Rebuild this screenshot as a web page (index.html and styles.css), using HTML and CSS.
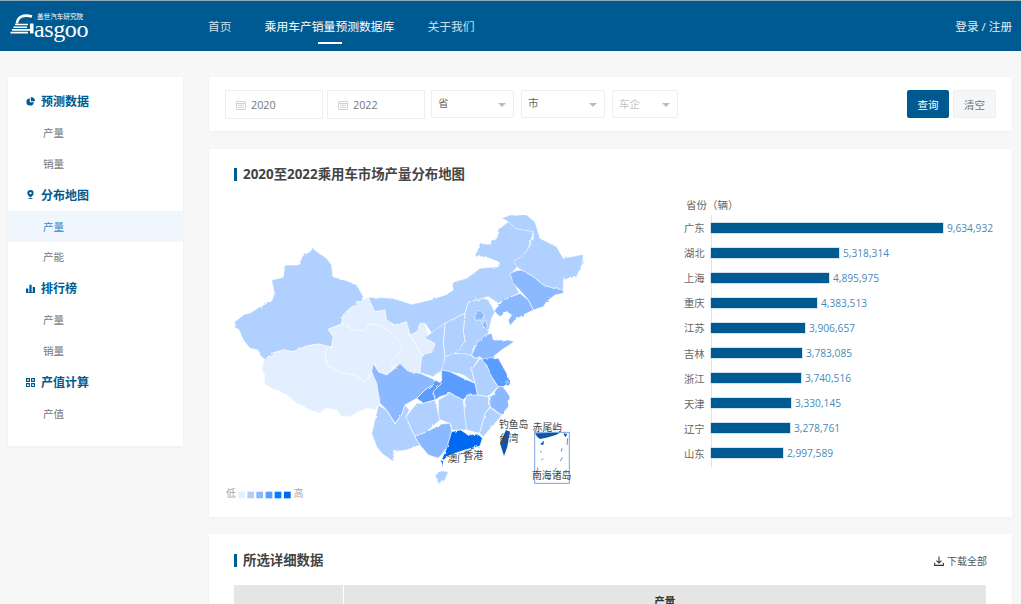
FILE: index.html
```html
<!DOCTYPE html>
<html lang="zh-CN">
<head>
  <meta charset="UTF-8" />
  <meta name="viewport" content="width=device-width, initial-scale=1.0" />
  <title>乘用车产销量预测数据库</title>
  <link rel="stylesheet" href="styles.css">
</head>
<body>
  <!-- Header -->
  <header class="topbar">
    <a class="logo">
      <svg class="logo-mark" viewBox="0 0 24 20" width="24" height="20">
        <path d="M7 9.500C7.500 3 13 0 22 2.500" fill="none" stroke="#fff" stroke-width="2.600" />
        <path d="M5 10.500H18M3.500 13.200H17M2 15.900H20M0.500 18.600H18" stroke="#fff" stroke-width="1.600" />
        <path d="M20 9.500H23.500V19.400H20Z" fill="#fff" />
      </svg>
      <span class="logo-text">
        <small>盖世汽车研究院</small>
        <b>asgoo</b>
      </span>
    </a>
    <nav class="nav">
      <a>首页</a>
      <a class="current">乘用车产销量预测数据库</a>
      <a>关于我们</a>
    </nav>
    <a class="login">登录 / 注册</a>
  </header>

  <div class="page">
    <!-- Sidebar -->
    <aside class="sidebar">
      <h3>
        <svg viewBox="0 0 12 12" width="9" height="9"><path d="M5 1.500A5 5 0 1 0 10.500 7H5Z" /><path d="M6.500 0A5.500 5.500 0 0 1 12 5.500H6.500Z" /></svg>
        预测数据
      </h3>
      <a>产量</a>
      <a>销量</a>
      <h3>
        <svg viewBox="0 0 12 12" width="9" height="11"><path fill-rule="evenodd" d="M6 0A4.200 4.200 0 0 1 10.200 4.200C10.200 6.500 7.500 8.500 6 10C4.500 8.500 1.800 6.500 1.800 4.200A4.200 4.200 0 0 1 6 0ZM6 2.700A1.500 1.500 0 1 0 6 5.700A1.500 1.500 0 1 0 6 2.700Z" /><rect x="3.500" y="10.800" width="5" height="1.200" /></svg>
        分布地图
      </h3>
      <a class="active">产量</a>
      <a>产能</a>
      <h3>
        <svg viewBox="0 0 12 12" width="9" height="9"><path d="M0 6H3V11H0ZM4.500 1H7.500V11H4.500ZM9 4H12V11H9ZM0 11H12V12H0Z" /></svg>
        排行榜
      </h3>
      <a>产量</a>
      <a>销量</a>
      <h3>
        <svg viewBox="0 0 12 12" width="9" height="9"><path fill-rule="evenodd" d="M0 0H5.300V5.300H0ZM1.500 1.500V3.800H3.800V1.500ZM6.700 0H12V5.300H6.700ZM8.200 1.500V3.800H10.500V1.500ZM0 6.700H5.300V12H0ZM1.500 8.200V10.500H3.800V8.200ZM6.700 6.700H12V12H6.700ZM8.200 8.200V10.500H10.500V8.200Z" /></svg>
        产值计算
      </h3>
      <a>产值</a>
    </aside>

    <main class="content">
      <!-- Filters -->
      <section class="card filters">
        <div class="date-input">
          <svg viewBox="0 0 10 10" width="10" height="10"><path d="M0.500 1.500H9.500V9.500H0.500ZM0.500 3.500H9.500M2 5.200H8M2 7.200H8" fill="none" stroke="#d0d4d8" /></svg>
          2020
        </div>
        <div class="date-input">
          <svg viewBox="0 0 10 10" width="10" height="10"><path d="M0.500 1.500H9.500V9.500H0.500ZM0.500 3.500H9.500M2 5.200H8M2 7.200H8" fill="none" stroke="#d0d4d8" /></svg>
          2022
        </div>
        <div class="select sel-province">省<i></i></div>
        <div class="select sel-city">市<i></i></div>
        <div class="select sel-brand disabled">车企<i></i></div>
        <button class="btn primary">查询</button>
        <button class="btn plain">清空</button>
      </section>

      <!-- Map and ranking -->
      <section class="card map-card">
        <h2 class="title">2020至2022乘用车市场产量分布地图</h2>
        <div class="chart-row">
          <svg class="map" viewBox="0 0 1140 930" width="380" height="310">
            <defs>
              <!-- roughens the province outlines -->
              <filter id="rough" x="-5%" y="-5%" width="110%" height="110%">
                <feTurbulence type="fractalNoise" baseFrequency="0.07" numOctaves="2" seed="4" result="noise" />
                <feDisplacementMap in="SourceGraphic" in2="noise" scale="8" result="moved" />
                <feGaussianBlur in="moved" stdDeviation="0.9" />
              </filter>
            </defs>
            <g class="regions" filter="url(#rough)">
              <path fill="#b0d1ff" d="M29 365L55 345L77 338L105 320L140 303L148 280L140 240L175 232L180 195L220 195L235 165L255 155L263 145L285 162L305 175L320 195L323 230L365 242L395 255L415 290L410 300L375 325L355 345L350 372L310 388L325 410L320 442L280 432L245 438L205 455L175 450L140 460L120 480L105 465L100 450L75 445L55 420L43 390L29 382Z" />
              <path fill="#e3efff" d="M115 485L140 460L175 450L205 455L245 438L280 432L320 442L300 455L305 495L345 518L390 525L415 545L435 530L440 515L455 540L465 610L450 630L430 625L400 635L375 650L350 650L335 630L300 625L285 640L255 630L215 610L185 585L165 575L140 565L115 550L120 530L110 505Z" />
              <path fill="#e3efff" d="M350 372L355 345L375 325L410 300L430 292L440 315L450 335L480 330L485 360L510 375L545 365L555 405L570 430L590 465L585 518L560 525L525 490L505 505L495 485L400 400Z" />
              <path fill="#e3efff" d="M555 405L575 395L585 370L600 370L610 405L632 430L627 458L590 467L570 430Z" />
              <path fill="#e3efff" d="M310 388L350 372L390 392L425 392L430 372L465 375L500 400L530 430L530 450L515 470L495 485L505 505L485 525L460 515L450 492L440 515L435 530L415 545L390 525L345 518L305 495L300 455L320 442L325 410Z" />
              <path fill="#b0d1ff" d="M430 292L505 295L560 313L615 300L660 285L685 270L680 247L725 235L765 205L820 200L820 185L780 170L750 170L765 130L790 133L815 115L825 85L850 65L930 65L925 100L900 175L860 220L880 280L820 310L790 290L730 307L720 340L670 365L620 400L600 370L585 370L575 395L555 405L545 365L510 375L485 360L480 330L450 335L440 315Z" />
              <path fill="#b0d1ff" d="M850 65L870 85L925 95L925 115L910 145L895 165L865 185L880 205L890 210L925 230L955 255L985 265L1015 270L1015 240L1055 230L1073 190L1075 163L1015 175L995 140L945 115L930 65L905 45L855 45L830 55Z" />
              <path fill="#8ab9ff" d="M855 220L875 212L890 210L925 230L955 255L985 265L1015 270L1015 280L990 285L965 305L955 320L925 330L910 300L890 277L865 250Z" />
              <path fill="#8ab9ff" d="M807 333L835 300L885 280L910 300L925 330L895 345L870 360L855 377L850 360L860 345L845 335L825 350Z" />
              <path fill="#b0d1ff" d="M720 340L730 307L775 295L790 300L810 335L800 355L790 400L755 430L745 445L740 470L690 460L720 425L715 395Z" />
              <path fill="#8ab9ff" d="M750 345L765 330L778 345L770 360L750 360Z" />
              <path fill="#8ab9ff" d="M770 365L783 360L787 380L775 383Z" />
              <path fill="#b0d1ff" d="M660 370L720 340L715 395L720 425L690 460L660 475L655 430Z" />
              <path fill="#b0d1ff" d="M600 415L610 405L660 368L655 430L660 475L670 510L650 512L625 530L585 518L590 465L625 455L630 430Z" />
              <path fill="#b0d1ff" d="M660 470L690 460L735 465L750 475L765 470L740 510L750 550L715 525L650 510Z" />
              <path fill="#8ab9ff" d="M740 465L755 430L780 405L800 400L805 420L850 420L868 425L830 450L805 470L780 485L765 470L750 475Z" />
              <path fill="#b0d1ff" d="M740 510L765 475L780 485L805 540L820 560L790 590L757 585L750 550Z" />
              <path fill="#5a9cff" d="M770 478L800 472L820 475L845 520L855 545L835 560L820 560L800 530L785 495Z" />
              <path fill="#5a9cff" d="M845 542L857 548L850 558L840 553Z" />
              <path fill="#8ab9ff" d="M820 560L835 560L855 590L850 620L830 645L795 620L795 595Z" />
              <path fill="#b0d1ff" d="M795 622L830 647L810 670L775 710L763 700L775 660L780 640Z" />
              <path fill="#b0d1ff" d="M725 585L757 585L790 590L795 620L780 640L775 660L763 700L725 690L715 655L720 600Z" />
              <path fill="#5a9cff" d="M650 510L675 515L715 535L750 550L757 585L725 585L715 600L675 580L645 590L630 600L625 575L650 550Z" />
              <path fill="#b0d1ff" d="M640 600L675 580L715 600L720 655L725 690L680 690L675 670L645 660L640 640Z" />
              <path fill="#5a9cff" d="M630 540L650 550L625 575L630 600L595 610L575 595L600 570L620 555Z" />
              <path fill="#8ab9ff" d="M445 490L460 515L485 525L510 505L525 490L550 515L585 520L630 540L620 555L600 570L575 595L540 615L530 645L510 670L485 630L465 610L455 550L440 515Z" />
              <path fill="#b0d1ff" d="M543 650L575 610L595 610L630 600L640 640L645 660L605 695L570 710L555 680Z" />
              <path fill="#b0d1ff" d="M445 680L460 615L485 630L510 672L530 645L540 615L553 630L543 650L555 680L570 710L585 735L545 750L505 755L505 785L470 760L455 740L440 700Z" />
              <path fill="#8ab9ff" d="M570 710L605 695L650 672L675 670L680 695L665 745L640 775L610 765L585 735Z" />
              <path fill="#0069f0" d="M680 695L707 690L730 705L760 702L772 715L765 738L720 750L675 765L655 780L653 805L647 785L665 745Z" />
              <path fill="#b0d1ff" d="M630 825L650 812L670 815L660 840L640 852Z" />
            </g>
            <path class="taiwan" d="M843 690L855 695L847 740L837 768L825 730Z" />
            <g class="inset">
              <rect x="929" y="697" width="104" height="153" />
              <path class="land" d="M930 700L1005 698Q985 710 945 717Q935 712 930 700Z" />
              <path class="land" d="M1015 700L1027 702L1021 712Z" />
              <path class="land" d="M945 733L957 722L955 735Z" />
              <path class="isle" d="M947 752L949 758M1011 745L1009 755M1028 715L1026 735M1012 772L1006 784M955 775L949 781M995 803L988 813M937 802L939 810" />
            </g>
            <g class="labels">
              <text x="866" y="685">钓鱼岛</text>
              <text x="851" y="727">台湾</text>
              <text x="967" y="693">赤尾屿</text>
              <text x="697" y="785">澳门</text>
              <text x="745" y="778">香港</text>
              <text x="980" y="837">南海诸岛</text>
            </g>
            <g class="legend">
              <text x="18" y="892">低</text>
              <rect x="40" y="875" width="20" height="20" fill="#e3efff" />
              <rect x="67" y="875" width="20" height="20" fill="#b0d1ff" />
              <rect x="94" y="875" width="20" height="20" fill="#8ab9ff" />
              <rect x="122" y="875" width="20" height="20" fill="#5a9cff" />
              <rect x="149" y="875" width="20" height="20" fill="#0080ff" />
              <rect x="177" y="875" width="20" height="20" fill="#0069f0" />
              <text x="221" y="892">高</text>
            </g>
          </svg>

          <div class="ranking">
            <div class="unit">省份（辆）</div>
            <div class="bars">
              <div class="bar-row"><span class="name">广东</span><span class="bar" style="width:232px"></span><span class="num">9,634,932</span></div>
              <div class="bar-row"><span class="name">湖北</span><span class="bar" style="width:128px"></span><span class="num">5,318,314</span></div>
              <div class="bar-row"><span class="name">上海</span><span class="bar" style="width:118px"></span><span class="num">4,895,975</span></div>
              <div class="bar-row"><span class="name">重庆</span><span class="bar" style="width:106px"></span><span class="num">4,383,513</span></div>
              <div class="bar-row"><span class="name">江苏</span><span class="bar" style="width:94px"></span><span class="num">3,906,657</span></div>
              <div class="bar-row"><span class="name">吉林</span><span class="bar" style="width:91px"></span><span class="num">3,783,085</span></div>
              <div class="bar-row"><span class="name">浙江</span><span class="bar" style="width:90px"></span><span class="num">3,740,516</span></div>
              <div class="bar-row"><span class="name">天津</span><span class="bar" style="width:80px"></span><span class="num">3,330,145</span></div>
              <div class="bar-row"><span class="name">辽宁</span><span class="bar" style="width:79px"></span><span class="num">3,278,761</span></div>
              <div class="bar-row"><span class="name">山东</span><span class="bar" style="width:72px"></span><span class="num">2,997,589</span></div>
            </div>
          </div>
        </div>
      </section>

      <!-- Detail table -->
      <section class="card detail-card">
        <div class="detail-head">
          <h2 class="title">所选详细数据</h2>
          <a class="download">
            <svg viewBox="0 0 12 12" width="10" height="10"><path d="M6 0.500V8M3 5.500L6 8.500L9 5.500M0.800 8V11.200H11.200V8" fill="none" stroke="#333" stroke-width="1.300" /></svg>
            下载全部
          </a>
        </div>
        <table class="detail-table">
          <tr>
            <th class="first"></th>
            <th>产量</th>
          </tr>
        </table>
      </section>
    </main>
  </div>
</body>
</html>
```

FILE: styles.css
```css
/* Reset & Body */
* { box-sizing: border-box; margin: 0; padding: 0; }
html, body { width: 100%; height: 100%; overflow: hidden; }
body {
  font-family: "Open Sans", "Noto Sans CJK SC", sans-serif;
  font-size: 12px;
  color: #666;
  background: #f7f7f7;
}

/* Header */
.topbar {
  height: 51px;
  display: flex; align-items: center;
  padding: 0 9px 0 10px;
  background: #005a92;
  border-top: 1px solid #8fa9b8;
  color: #fff;
}
.logo { display: flex; width: 198px; height: 26px; margin-top: 2px; }
.logo-mark { flex: none; }
.logo-text { display: flex; flex-direction: column; }
.logo-text small { font-size: 6.6px; line-height: 6px; margin-left: 3px; white-space: nowrap; }
.logo-text b {
  font-family: "Liberation Serif", serif;
  font-weight: normal;
  font-size: 24px;
  line-height: 18px;
  letter-spacing: -0.4px;
  height: 19px;
}
.nav { display: flex; gap: 33px; flex: 1; height: 100%; font-size: 11.8px; }
.nav a {
  position: relative;
  display: flex; align-items: center;
  padding-bottom: 1px;
  color: #cfe0ea;
}
.nav a.current { color: #fff; }
.nav a.current::after {
  content: "";
  position: absolute;
  left: 53px; bottom: 7px;
  width: 24px; height: 2px;
  background: #fff;
}
.login { font-size: 11.6px; color: #e6eff5; }

/* Page layout */
.page { display: flex; gap: 26px; padding: 26px 9px 0 8px; }

/* Sidebar */
.sidebar {
  width: 175px;
  flex: none;
  align-self: flex-start;
  padding: 8px 0 17px;
  background: #fff;
  box-shadow: 0 1px 4px rgba(0,0,0,0.04);
}
.sidebar h3 {
  display: flex; align-items: center; gap: 6px;
  height: 32px;
  padding-left: 18px;
  font-size: 12px;
  font-weight: bold;
  color: #005a92;
}
.sidebar a {
  display: flex; align-items: center;
  height: 30.850px;
  padding-left: 35px;
  font-size: 10.600px;
  color: #777;
}
.sidebar a.active { background: #eff6fd; color: #3d86bd; }
.sidebar svg { fill: #005a92; flex: none; }

/* Cards */
.content { flex: 1; min-width: 0; }
.card { background: #fff; box-shadow: 0 1px 4px rgba(0,0,0,0.03); }

/* Filters */
.filters {
  display: flex; align-items: flex-start;
  height: 54px;
  padding: 13px 16px 0;
}
.date-input {
  display: flex; align-items: center; gap: 5px;
  width: 98px; height: 29px;
  margin-right: 4px;
  padding-left: 10px;
  border: 1px solid #eee;
  font-size: 10.800px;
  color: #777;
}
.date-input + .select { margin-left: 2px; }
.select {
  position: relative;
  display: flex; align-items: center;
  height: 28px;
  margin-right: 7px;
  padding: 0 0 3px 6px;
  border: 1px solid #eee;
  border-radius: 2px;
  font-size: 10.500px;
  color: #666;
}
.select i {
  position: absolute;
  right: 7px; top: 12px;
  border: 4px solid transparent;
  border-top: 4px solid #bbb;
  border-bottom: 0;
}
.sel-province { width: 83px; }
.sel-city { width: 84px; }
.sel-brand { width: 66px; padding-bottom: 1px; }
.select.disabled { color: #c4c4c4; }
.btn {
  height: 28px;
  border: 1px solid #eee;
  border-radius: 2px;
  font: inherit;
  font-size: 10.500px;
}
.btn.primary {
  width: 42px;
  margin-left: auto;
  margin-right: 4px;
  background: #005a92;
  border-color: #005a92;
  color: #fff;
}
.btn.plain { width: 43px; background: #f5f6f7; color: #777; }

/* Map card */
.map-card { height: 368px; margin-top: 18px; padding: 16px 16px 0; }
.title {
  position: relative;
  padding-left: 18px;
  font-size: 13.400px;
  line-height: 19px;
  font-weight: bold;
  color: #444;
}
.title::before {
  content: "";
  position: absolute;
  left: 9px; top: 3px;
  width: 3px; height: 13px;
  background: #005a92;
}
.chart-row { display: flex; margin-top: 16px; }
.map { flex: none; }
.map .regions path { stroke: #fff; stroke-width: 1.800; stroke-linejoin: round; }
.map .taiwan { fill: #0a57ad; }
.map text { font-size: 29.500px; text-anchor: middle; fill: #444; }
.map .legend text { fill: #aaa; }
.inset rect { fill: none; stroke: #7ba3dc; stroke-width: 3; }
.inset .land { fill: #0a57ad; }
.inset .isle { fill: none; stroke: #5b93d8; stroke-width: 3; }

/* Ranking bars */
.ranking { margin: -5px 0 0 79px; width: 320px; }
.unit { height: 20px; padding-left: 2px; font-size: 10.500px; line-height: 20px; color: #666; }
.bars { position: relative; }
.bars::before {
  content: "";
  position: absolute;
  left: 27px; top: 0; bottom: -1px;
  width: 1px;
  background: #e2e2e2;
}
.bar-row { display: flex; align-items: center; height: 25.100px; }
.name { width: 27px; flex: none; font-size: 10.300px; color: #666; }
.bar {
  position: relative;
  height: 10px;
  background: #005a92;
  box-shadow: 0 0 0 1px #d3e2ee;
}
.num { margin-left: 4px; font-size: 10.200px; color: #4a8ab8; }

/* Detail card */
.detail-card { margin-top: 17px; padding: 17px 25px 0 16px; height: 200px; }
.detail-head { display: flex; justify-content: space-between; align-items: center; }
.download { display: flex; align-items: center; gap: 3px; font-size: 10px; color: #555; }
.detail-table {
  width: 752px;
  margin: 15px 0 0 9px;
  border-collapse: collapse;
}
.detail-table th {
  height: 30px;
  background: #e5e5e5;
  font-size: 10.500px;
  color: #333;
  border-left: 1px solid #fff;
}
.detail-table .first { width: 109px; border-left: 0; }
```
